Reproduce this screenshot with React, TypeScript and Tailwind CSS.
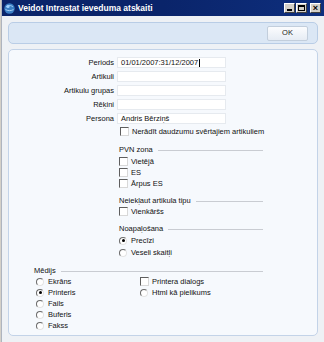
import React from 'react';

const font = { fontFamily: '"Liberation Sans", Arial, sans-serif' };

function Check({ label, className = '' }: { label: string; className?: string }) {
  return (
    <div className={`flex h-[11px] items-center ${className}`}>
      <span className="box-border h-[9px] w-[9px] border border-t-[#5e5e5e] border-l-[#5e5e5e] border-b-[#d8d8d8] border-r-[#d8d8d8] bg-white" />
      <span className="ml-[3px] text-[7.5px] leading-none text-[#111]">{label}</span>
    </div>
  );
}

function Radio({ label, checked = false, className = '' }: { label: string; checked?: boolean; className?: string }) {
  return (
    <div className={`flex h-[11px] items-center ${className}`}>
      <span className="relative box-border flex h-[8px] w-[8px] items-center justify-center rounded-full border border-t-[#6a6a6a] border-l-[#6a6a6a] border-b-[#e4e4e4] border-r-[#e4e4e4] bg-white">
        {checked && <span className="h-[3px] w-[3px] rounded-full bg-black" />}
      </span>
      <span className="ml-[4px] text-[7.5px] leading-none text-[#111]">{label}</span>
    </div>
  );
}

function Section({ title, className = '' }: { title: string; className?: string }) {
  return (
    <div className={`flex h-[10px] items-center ${className}`}>
      <span className="text-[7.5px] leading-none text-[#111]">{title}</span>
      <span className="ml-[5px] h-px flex-1 bg-[#c9ccd2]" />
    </div>
  );
}

function Field({ label, value = '', caret = false }: { label: string; value?: string; caret?: boolean }) {
  return (
    <div className="flex h-[11px] items-center">
      <span className="w-[105px] text-right text-[7.5px] leading-none text-[#111]">{label}</span>
      <div className="ml-[3px] box-border flex h-[11px] w-[109px] items-center border border-[#e6eaef] bg-white pl-[3px] text-[7.5px] leading-none text-[#111]">
        {value}
        {caret && <span className="ml-px h-[8px] w-px bg-black" />}
      </div>
    </div>
  );
}

export default function App() {
  return (
    <div className="h-[342px] w-[324px] overflow-hidden bg-[#d4d0c8]" style={font}>
      <div className="ml-px flex h-[342px] flex-col border-l border-[#aeb4bf] bg-[#eef1f5]">
        {/* title bar */}
        <div className="flex h-[16px] items-center bg-gradient-to-r from-[#0a246a] via-[#0a246a] to-[#0e2f7e] pl-[2px] pr-[3px]">
          <svg width="11" height="11" viewBox="0 0 11 11">
            <circle cx="5.5" cy="5.5" r="5.2" fill="#3b7fc4" />
            <path d="M2 4c2-2 5-2 7 0M1.5 6.5c2 1.5 6 1.5 8 0" stroke="#bfe0ff" strokeWidth="0.8" fill="none" />
            <circle cx="4" cy="3.5" r="1.6" fill="#9fd0ff" />
          </svg>
          <span className="ml-[3px] text-[8.5px] font-bold text-white">Veidot Intrastat ieveduma atskaiti</span>
          <div className="ml-auto flex gap-[1px]">
            <div className="flex h-[10px] w-[11px] items-end justify-center border border-t-white border-l-white border-b-[#404040] border-r-[#404040] bg-[#d4d0c8] pb-[1px]">
              <span className="h-[2px] w-[5px] bg-black" />
            </div>
            <div className="flex h-[10px] w-[11px] items-center justify-center border border-t-white border-l-white border-b-[#404040] border-r-[#404040] bg-[#d4d0c8]">
              <span className="box-border h-[6px] w-[7px] border border-t-2 border-black" />
            </div>
            <div className="ml-[2px] flex h-[10px] w-[11px] items-center justify-center border border-t-white border-l-white border-b-[#404040] border-r-[#404040] bg-[#d4d0c8] text-[9px] font-bold leading-none text-black">
              ×
            </div>
          </div>
        </div>

        <div className="flex flex-1 flex-col px-[6px] pt-[6px]">
          {/* toolbar panel */}
          <div className="flex h-[22px] items-center justify-end rounded-[5px] border border-[#b9cde6] bg-[#dbe7f5] pr-[9px]">
            <div className="flex h-[15px] w-[41px] items-center justify-center rounded-[2px] border border-[#c2cedc] bg-gradient-to-b from-[#fbfcfe] to-[#e6ecf4] text-[7.5px] text-[#222]">
              OK
            </div>
          </div>

          {/* main panel */}
          <div className="mt-[5px] h-[287px] rounded-[5px] border border-[#c3d3e8] bg-[#f6f9fd] pt-[7px]">
            <div className="flex flex-col gap-[3px]">
              <Field label="Periods" value="01/01/2007:31/12/2007" caret />
              <Field label="Artikuli" />
              <Field label="Artikulu grupas" />
              <Field label="Rēķini" />
              <Field label="Persona" value="Andris Bērziņš" />
            </div>
            <Check label="Nerādīt daudzumu svērtajiem artikuliem" className="ml-[111px] mt-[2px]" />

            <div className="ml-[110px] mr-[54px] flex flex-col">
              <Section title="PVN zona" className="mt-[8px]" />
              <Check label="Vietējā" className="mt-[1px]" />
              <Check label="ES" />
              <Check label="Ārpus ES" />

              <Section title="Neiekļaut artikula tipu" className="mt-[7px]" />
              <Check label="Vienkāršs" />

              <Section title="Noapaļošana" className="mt-[7px]" />
              <Radio label="Precīzi" checked className="mt-[1px]" />
              <Radio label="Veseli skaitļi" className="mt-[1px]" />
            </div>

            <div className="ml-[25px] mr-[54px] mt-[8px] flex flex-col">
              <Section title="Mēdijs" />
              <div className="flex">
                <div className="flex w-[106px] flex-col">
                  <Radio label="Ekrāns" className="ml-[2px]" />
                  <Radio label="Printeris" checked className="ml-[2px]" />
                  <Radio label="Fails" className="ml-[2px]" />
                  <Radio label="Buferis" className="ml-[2px]" />
                  <Radio label="Fakss" className="ml-[2px]" />
                </div>
                <div className="flex flex-col">
                  <Check label="Printera dialogs" />
                  <Radio label="Html kā pielikums" />
                </div>
              </div>
            </div>
          </div>
        </div>
      </div>
    </div>
  );
}
